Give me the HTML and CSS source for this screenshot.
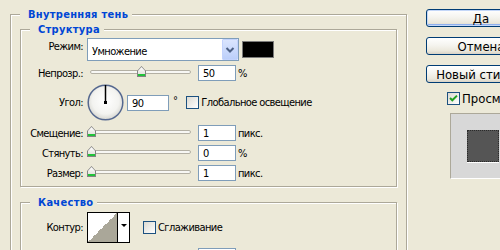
FILE: index.html
```html
<!DOCTYPE html>
<html lang="ru">

<head>
    <title>Стиль слоя</title>
    <meta charset="UTF-8">
    <link rel="stylesheet" href="styles.css">
</head>

<body>
    <div class="dialog">
        <div class="main">
            <fieldset class="group">
                <legend>Внутренняя тень</legend>

                <fieldset class="group structure">
                    <legend>Структура</legend>
                    <div class="row row-mode">
                        <span class="lbl">Режим:</span>
                        <div class="select">
                            <span class="select-text">Умножение</span>
                            <span class="select-btn">
                                <svg width="14" height="19" viewBox="0 0 14 19"><path d="M3.5 8 L7 11.5 L10.5 8" fill="none" stroke="#4d6185" stroke-width="2"/></svg>
                            </span>
                        </div>
                        <span class="swatch"></span>
                    </div>
                    <div class="row">
                        <span class="lbl">Непрозр.:</span>
                        <div class="slider"><div class="track"></div><span class="thumb" style="left:50px"></span></div>
                        <span class="field">50</span><span class="unit">%</span>
                    </div>
                    <div class="row row-angle">
                        <span class="lbl">Угол:</span>
                        <svg class="dial" width="37" height="37" viewBox="0 0 37 37">
                            <defs>
                                <radialGradient id="dialFill" cx="50%" cy="45%" r="55%">
                                    <stop offset="0" stop-color="#ffffff"/>
                                    <stop offset="0.7" stop-color="#f3f3f0"/>
                                    <stop offset="1" stop-color="#d6d6d0"/>
                                </radialGradient>
                            </defs>
                            <circle cx="18.5" cy="18.5" r="17.3" fill="url(#dialFill)" stroke="#55688f" stroke-width="1.5"/>
                            <line x1="18.5" y1="18.5" x2="18.5" y2="1" stroke="#000" stroke-width="1.5"/>
                            <rect x="17" y="17" width="3" height="3" fill="#000"/>
                        </svg>
                        <span class="field field-angle">90</span><span class="deg">°</span>
                        <span class="check"></span><span class="check-text">Глобальное освещение</span>
                    </div>
                    <div class="row">
                        <span class="lbl">Смещение:</span>
                        <div class="slider"><div class="track"></div><span class="thumb" style="left:0px"></span></div>
                        <span class="field">1</span><span class="unit">пикс.</span>
                    </div>
                    <div class="row">
                        <span class="lbl">Стянуть:</span>
                        <div class="slider"><div class="track"></div><span class="thumb" style="left:0px"></span></div>
                        <span class="field">0</span><span class="unit">%</span>
                    </div>
                    <div class="row">
                        <span class="lbl">Размер:</span>
                        <div class="slider"><div class="track"></div><span class="thumb" style="left:0px"></span></div>
                        <span class="field">1</span><span class="unit">пикс.</span>
                    </div>
                </fieldset>

                <fieldset class="group quality">
                    <legend>Качество</legend>
                    <div class="row row-contour">
                        <span class="lbl">Контур:</span>
                        <div class="contour">
                            <span class="contour-curve"></span>
                            <span class="contour-arrow"></span>
                        </div>
                        <span class="check check-smooth"></span><span class="check-text">Сглаживание</span>
                    </div>
                    <div class="row">
                        <span class="lbl"></span>
                        <div class="slider-space"></div>
                        <span class="field"></span>
                    </div>
                </fieldset>
            </fieldset>
        </div>

        <div class="side">
            <button class="btn btn-default">Да</button>
            <button class="btn">Отмена</button>
            <button class="btn">Новый стиль...</button>
            <div class="preview-toggle">
                <span class="check">
                    <svg width="11" height="11" viewBox="0 0 11 11"><path d="M2 5 L4.3 7.3 L9 2.6" fill="none" stroke="#21a121" stroke-width="2"/></svg>
                </span>
                <span class="check-text">Просмотр</span>
            </div>
            <div class="preview"><div class="preview-swatch"></div></div>
        </div>
    </div>
</body>

</html>
```

FILE: styles.css
```css
* {
    box-sizing: border-box;
}

html,
body {
    margin: 0;
    height: 250px;
    overflow: hidden;
}

body {
    background: #ece9d8;
    font-family: "DejaVu Sans Condensed", "Liberation Sans", Tahoma, sans-serif;
    font-size: 11px;
    letter-spacing: -0.6px;
    color: #000;
}

.dialog {
    display: flex;
    padding: 8px 0 0 10px;
}

.main {
    flex: none;
    width: 397px;
}

.side {
    flex: none;
    width: 110px;
    margin-left: 19px;
    padding-top: 1px;
    font-size: 13px;
    letter-spacing: 0;
}

/* etched group boxes */
.group {
    margin: 0;
    padding: 2px 9px 0;
    min-width: 0;
    border: 1px solid #aca899;
    box-shadow: inset 1px 1px #fff, 1px 1px #fff;
}

.group legend {
    padding: 0 4px 0 8px;
    line-height: 13px;
    font-weight: bold;
    letter-spacing: 0.3px;
    color: #0046d5;
    background: #ece9d8;
}

.group .group {
    padding: 2px 0 5px;
}

.group .group legend {
    margin-left: 9px;
}

.quality {
    margin-top: 9px !important;
    padding-top: 3px !important;
}

/* rows */
.row {
    display: flex;
    align-items: center;
    height: 16px;
    margin-top: 4px;
    white-space: nowrap;
}

.row-mode {
    height: 23px;
    margin-top: 0;
}

.row-angle {
    height: 37px;
    margin-top: 3px;
}

.row-contour {
    height: 31px;
    margin-top: 0;
}

.row-contour + .row {
    margin-top: 5px;
}

.lbl {
    flex: none;
    width: 62px;
    margin-right: 4px;
    text-align: right;
}

.row-mode .lbl {
    margin-bottom: 7px;
}

/* dropdown */
.select {
    display: flex;
    align-items: center;
    width: 152px;
    height: 23px;
    border: 1px solid #7f9db9;
    background: #fff;
}

.select-text {
    flex: 1;
    padding: 3px 0 0 4px;
}

.select-btn {
    width: 16px;
    height: 100%;
    border: 1px solid #c3d3fd;
    border-radius: 1px;
    background: linear-gradient(#dae5fe, #bccffa);
}

.select-btn svg {
    display: block;
}

.swatch {
    width: 32px;
    height: 17px;
    margin-left: 3px;
    border: 1px solid #7b7b7b;
    background: #000;
}

/* sliders */
.slider {
    position: relative;
    width: 107px;
    height: 16px;
}

.track {
    width: 101px;
    height: 4px;
    margin: 5px 0 0 3px;
    border: 1px solid #b3b0a4;
    border-radius: 2px;
    background: #f7f7f4;
}

.thumb {
    position: absolute;
    top: 1px;
    width: 9px;
    height: 11px;
    background: linear-gradient(#21c23a, #21c23a) no-repeat 1px 8px / 7px 2px, #838383;
    clip-path: polygon(50% 0, 100% 45%, 100% 100%, 0 100%, 0 45%);
}

.thumb::after {
    content: "";
    position: absolute;
    left: 1px;
    top: 1px;
    width: 7px;
    height: 7px;
    background: linear-gradient(#fff, #e4e3dd);
    clip-path: polygon(50% 0, 100% 52%, 100% 100%, 0 100%, 0 52%);
}

.slider-space {
    width: 107px;
}

/* text fields */
.field {
    width: 38px;
    height: 16px;
    margin-left: 4px;
    padding: 1px 0 0 4px;
    border: 1px solid #7f9db9;
    background: #fff;
    line-height: 13px;
}

.unit {
    margin-left: 2px;
}

.dial {
    flex: none;
}

.field-angle {
    width: 42px;
    margin-left: 3px;
}

.deg {
    margin: -4px 0 0 4px;
}

/* checkboxes */
.check {
    flex: none;
    width: 13px;
    height: 13px;
    margin-left: 9px;
    border: 1px solid #1c5180;
    background: linear-gradient(to bottom right, #dcdad2, #fff);
}

.check svg {
    display: block;
}

.check-text {
    margin-left: 2px;
}

.check-smooth {
    margin-left: 13px;
}

/* contour picker */
.contour {
    display: flex;
    width: 43px;
    height: 31px;
    border: 1px solid #000;
    background: #fff;
}

.contour-curve {
    width: 30px;
    border-right: 1px solid #000;
    background: linear-gradient(to bottom right, #fff 50%, #aaa799 50%);
}

.contour-arrow {
    flex: 1;
    display: flex;
    align-items: center;
    justify-content: center;
}

.contour-arrow::before {
    content: "";
    border-style: solid;
    border-width: 3px 3px 0;
    border-color: #000 transparent transparent;
    margin-top: -4px;
}

/* right column */
.btn {
    display: block;
    width: 110px;
    height: 18px;
    margin: 0 0 10px;
    padding: 0;
    border: 1px solid #003c74;
    border-radius: 3px;
    background: linear-gradient(#fff, #f5f4ef 45%, #ebe8dc 80%, #d8d2c6);
    font: inherit;
    letter-spacing: inherit;
    color: #000;
    line-height: 15px;
    text-align: center;
}

.btn-default {
    box-shadow: inset 0 0 0 1px #c4d7f8, inset 0 -2px 0 #8fb0ee;
}

.preview-toggle {
    display: flex;
    align-items: center;
    height: 13px;
    margin: -1px 0 0 21px;
}

.preview-toggle .check {
    margin-left: 0;
}

.preview {
    display: flex;
    align-items: center;
    justify-content: center;
    width: 66px;
    height: 66px;
    margin: 8px 0 0 24px;
    border: 1px solid;
    border-color: #aca899 #fff #fff #aca899;
    background: #d8d8d8;
}

.preview-swatch {
    width: 32px;
    height: 32px;
    border: 1px dotted #2a2a2a;
    background: #555;
    box-shadow: 0 1px #fff;
}
```
